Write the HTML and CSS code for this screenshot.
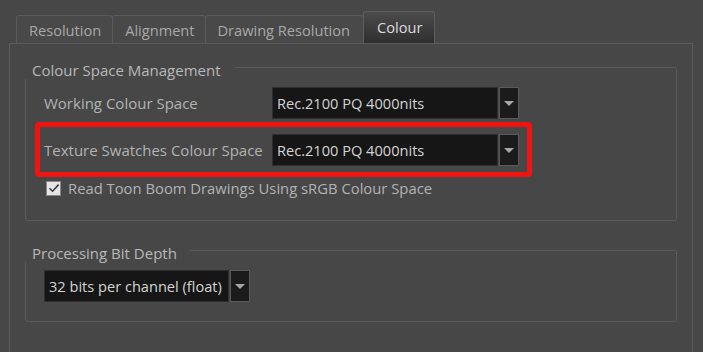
FILE: index.html
```html
<!DOCTYPE html>
<html>
<head>
<meta charset="utf-8">
<link rel="stylesheet" href="styles.css">
</head>
<body>
<div class="window">
  <div class="tabs">
    <div class="tab">Resolution</div>
    <div class="tab">Alignment</div>
    <div class="tab">Drawing Resolution</div>
    <div class="tab active">Colour</div>
  </div>
  <div class="pane">
    <div class="group group-colour">
      <div class="group-title">Colour Space Management</div>
      <div class="row">
        <span class="label">Working Colour Space</span>
        <div class="combo combo-wide">
          <div class="combo-value">Rec.2100 PQ 4000nits</div>
          <div class="combo-arrow"><span class="tri"></span></div>
        </div>
      </div>
      <div class="row row-second">
        <span class="label">Texture Swatches Colour Space</span>
        <div class="combo combo-wide">
          <div class="combo-value">Rec.2100 PQ 4000nits</div>
          <div class="combo-arrow"><span class="tri"></span></div>
        </div>
      </div>
      <div class="check-row">
        <span class="checkbox">
          <svg width="12" height="12" viewBox="0 0 12 12"><path d="M1.5 6.2 L4.6 9.2 L10.6 2.6" fill="none" stroke="#3a3a3a" stroke-width="1.6"/></svg>
        </span>
        <span class="check-label">Read Toon Boom Drawings Using sRGB Colour Space</span>
      </div>
      <div class="highlight"></div>
    </div>
    <div class="group group-depth">
      <div class="group-title">Processing Bit Depth</div>
      <div class="row row-depth">
        <div class="combo">
          <div class="combo-value">32 bits per channel (float)</div>
          <div class="combo-arrow"><span class="tri"></span></div>
        </div>
      </div>
    </div>
  </div>
</div>
</body>
</html>
```
FILE: styles.css
```css
html, body {
  margin: 0;
  padding: 0;
}
body {
  background: #474747;
  font-family: "Open Sans", "Noto Sans", sans-serif;
  font-size: 15px;
  color: #b3b3b3;
  width: 703px;
  height: 352px;
  overflow: hidden;
}
.window {
  padding: 11px 10px 0 9px;
  height: 341px;
  display: flex;
  flex-direction: column;
}
.tabs {
  display: flex;
  align-items: flex-end;
  padding-left: 7px;
  height: 32px;
}
.tab {
  box-sizing: border-box;
  height: 28px;
  line-height: 26px;
  padding: 1px 11px 0 12px;
  border: 1px solid #5b5b5b;
  border-bottom: none;
  border-radius: 3px 3px 0 0;
  background: #494949;
  color: #a8a8a8;
  font-size: 14.6px;
  white-space: nowrap;
}
.tab + .tab {
  margin-left: -1px;
}
.tab.active {
  height: 32px;
  line-height: 30px;
  padding: 0 12px 0 13px;
  background: linear-gradient(#4b4b4b, #2f2f2f);
  color: #dcdcdc;
  border-color: #5e5e5e;
}
.tab:nth-child(2) {
  padding-right: 10px;
}
.tab:nth-child(3) {
  padding-right: 13px;
}
.pane {
  flex: 1;
  border: 1px solid #5a5a5a;
  border-bottom: none;
  padding: 23px 15px 0 15px;
}
.group {
  position: relative;
  border: 1px solid #5a5a5a;
  border-radius: 3px;
  padding: 0 18px;
}
.group-title {
  width: fit-content;
  margin: -6px 0 0 -19px;
  padding: 0 13px 0 7px;
  height: 17px;
  line-height: 17px;
  background: #474747;
  color: #b8b8b8;
}
.group-colour {
  height: 152px;
}
.group-depth {
  margin-top: 29px;
  padding-bottom: 19px;
}
.row {
  display: flex;
  align-items: center;
  margin-top: 8px;
  height: 32px;
}
.row-second {
  margin-top: 15px;
}
.row-depth {
  margin-top: 8px;
}
.label {
  width: 228px;
  flex: none;
}
.combo {
  display: flex;
  height: 32px;
  gap: 1px;
}
.combo-value {
  box-sizing: border-box;
  height: 32px;
  line-height: 30px;
  padding: 0 6px 0 4px;
  background: #161616;
  border: 1px solid #2e2e2e;
  color: #d4d4d4;
  font-size: 14.6px;
  white-space: nowrap;
}
.combo-wide .combo-value {
  width: 226px;
}
.combo-arrow {
  box-sizing: border-box;
  width: 20px;
  height: 32px;
  background: #1b1b1b;
  border: 1px solid #5a5a5a;
  display: flex;
  align-items: center;
  justify-content: center;
}
.tri {
  width: 0;
  height: 0;
  border-left: 5px solid transparent;
  border-right: 5px solid transparent;
  border-top: 5px solid #a6a6a6;
}
.check-row {
  display: flex;
  align-items: center;
  margin-top: 14px;
  height: 16px;
  padding-left: 2px;
}
.checkbox {
  box-sizing: border-box;
  width: 15px;
  height: 15px;
  background: #e6e6e6;
  border: 1px solid #8a8a8a;
  display: flex;
  align-items: center;
  justify-content: center;
  flex: none;
}
.check-label {
  margin-left: 7px;
  font-size: 14.8px;
  white-space: nowrap;
}
.highlight {
  position: absolute;
  left: 9px;
  top: 54px;
  width: 497px;
  height: 55px;
  box-sizing: border-box;
  border: 5px solid #f0130f;
  border-radius: 4px;
  pointer-events: none;
}
```
